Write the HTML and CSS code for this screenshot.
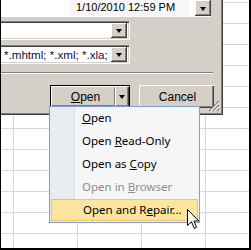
FILE: index.html
```html
<!DOCTYPE html>
<html lang="en">
<head>
  <meta charset="UTF-8">
  <title>Open and Repair</title>
  <link rel="stylesheet" href="styles.css">
</head>
<body>
  <div class="frame">
    <div class="dialog">
      <div class="list">
        <div class="list-name"></div>
        <div class="list-date">1/10/2010 12:59 PM</div>
        <div class="list-gap"></div>
        <div class="drop"><span class="arrow"></span></div>
      </div>
      <div class="field field-name">
        <span class="field-text"></span>
        <div class="drop"><span class="arrow"></span></div>
      </div>
      <div class="field field-type">
        <span class="field-text">*.mhtml; *.xml; *.xla;</span>
        <div class="drop"><span class="arrow"></span></div>
      </div>
      <div class="sep"></div>
      <div class="buttons">
        <div class="btn btn-open">
          <span class="open-main"><u>O</u>pen</span>
          <span class="open-arrow"><span class="arrow"></span></span>
        </div>
        <div class="btn btn-cancel">Cancel</div>
      </div>
      <svg class="grip" width="12" height="12" viewBox="0 0 12 12">
        <path d="M11 1 L1 11 M11 5 L5 11 M11 9 L9 11" stroke="#808080" stroke-width="1.2"/>
        <path d="M11 2.5 L2.5 11 M11 6.5 L6.5 11 M11 10.5 L10.5 11" stroke="#fff" stroke-width="1"/>
      </svg>
    </div>

    <ul class="menu">
      <li><u>O</u>pen</li>
      <li>Open <u>R</u>ead-Only</li>
      <li>Open as <u>C</u>opy</li>
      <li class="disabled">Open in <u>B</u>rowser</li>
      <li class="hot">Open and R<u>e</u>pair...</li>
    </ul>

    <svg class="cursor" width="13" height="21" viewBox="0 0 13 21">
      <path d="M0.5 0.5 L0.5 16.5 L4.5 12.8 L7.3 19.5 L9.6 18.5 L6.9 12 L11.8 12 Z" fill="#fff" stroke="#000" stroke-width="1" stroke-linejoin="miter"/>
    </svg>
  </div>
</body>
</html>
```

FILE: styles.css
```css
html, body {
  margin: 0;
  padding: 0;
  background: #fff;
  overflow: hidden;
}

.frame {
  position: relative;
  width: 251px;
  height: 250px;
  box-sizing: border-box;
  border-left: 1px solid #000;
  border-right: 2px solid #000;
  border-bottom: 2px solid #000;
  overflow: hidden;
  background-color: #fff;
  background-image:
    linear-gradient(to right, #d0d7e5 1px, transparent 1px),
    linear-gradient(to bottom, #d0d7e5 1px, transparent 1px);
  background-size: 64px 100%, 100% 21px;
  background-position: 12px 0, 0 2px;
  font-family: "Liberation Sans", Arial, sans-serif;
  font-size: 11px;
  color: #000;
}

/* file dialog, cut off on the left */
.dialog {
  position: absolute;
  left: -1px;
  top: 0;
  width: 223px;
  height: 115px;
  box-sizing: border-box;
  background: #d4d0c8;
  border-right: 1px solid #404040;
  border-bottom: 1px solid #404040;
  box-shadow: inset -1px -1px #808080;
}

.list {
  display: flex;
  height: 16px;
  margin-right: 11px;
  background: #fff;
  border-bottom: 1px solid #fff;
  box-shadow: 0 1px #d4d0c8;
}

.list-name {
  width: 69px;
}

.list-date {
  width: 120px;
  background: #f7f7f7;
  padding-left: 7px;
  box-sizing: border-box;
  line-height: 14px;
}

.list-gap {
  flex: 1;
}

.drop {
  width: 16px;
  height: 15px;
  background: #d4d0c8;
  box-shadow: inset -1px -1px #404040, inset 1px 1px #fff, inset -2px -2px #808080;
  display: flex;
  align-items: center;
  justify-content: center;
  flex-shrink: 0;
}

.list .drop {
  height: 16px;
}

.arrow {
  width: 0;
  height: 0;
  border-left: 3.5px solid transparent;
  border-right: 3.5px solid transparent;
  border-top: 4px solid #000;
  margin-top: 1px;
}

.field {
  width: 130px;
  height: 19px;
  box-sizing: border-box;
  background: #fff;
  border-top: 1px solid #808080;
  border-right: 1px solid #fff;
  border-bottom: 1px solid #fff;
  box-shadow: inset 0 1px #404040, inset -1px -1px #d4d0c8;
  display: flex;
  align-items: center;
  justify-content: space-between;
  padding: 1px 2px 1px 0;
}

.field-name {
  margin-top: 4px;
}

.field-type {
  margin-top: 5px;
}

.field-text {
  padding-left: 4px;
  white-space: nowrap;
  color: #101040;
  font-size: 11.6px;
}

.sep {
  width: 213px;
  height: 1px;
  margin-top: 8px;
  background: #808080;
  border-bottom: 1px solid #fff;
}

.buttons {
  display: flex;
  gap: 9px;
  padding-left: 50px;
  margin-top: 11px;
}

.btn {
  height: 23px;
  box-sizing: border-box;
  background: #d4d0c8;
  display: flex;
  align-items: center;
  justify-content: center;
  font-size: 12px;
}

.btn-open {
  width: 80px;
  border: 1px solid #000;
  box-shadow: inset 1px 1px #fff, inset -1px -1px #404040, inset -2px -2px #808080;
  justify-content: stretch;
}

.open-main {
  flex: 1;
  text-align: center;
  padding-left: 6px;
}

.open-arrow {
  width: 13px;
  height: 19px;
  margin-right: 1px;
  border-left: 1px solid #808080;
  box-shadow: inset 1px 0 #fff;
  display: flex;
  align-items: center;
  justify-content: center;
}

.btn-cancel {
  width: 75px;
  padding-left: 2px;
  box-shadow: inset 1px 1px #fff, inset -1px -1px #404040, inset -2px -2px #808080;
}

.grip {
  position: absolute;
  right: 2px;
  bottom: 2px;
}

/* Office 2007 dropdown menu */
.menu {
  position: absolute;
  left: 48px;
  top: 106px;
  width: 151px;
  margin: 0;
  padding: 0;
  list-style: none;
  box-sizing: border-box;
  border: 1px solid #7d9fcf;
  background: linear-gradient(to right, #e9ecee 0 24px, #dfe3e6 24px 25px, #f6f6f6 25px);
  font-family: "Noto Sans", "Open Sans", sans-serif;
  font-size: 11.5px;
}

.menu li {
  height: 23px;
  line-height: 22px;
  padding-left: 32px;
  box-sizing: border-box;
  white-space: nowrap;
}

.menu li.disabled {
  color: #8d8d8d;
}

.menu li.hot {
  margin: 0 1px 1px;
  padding-left: 31px;
  height: 22px;
  line-height: 20px;
  background: #fde59f;
  border: 1px solid #f2c26a;
}

.cursor {
  position: absolute;
  left: 186px;
  top: 209px;
}
```
